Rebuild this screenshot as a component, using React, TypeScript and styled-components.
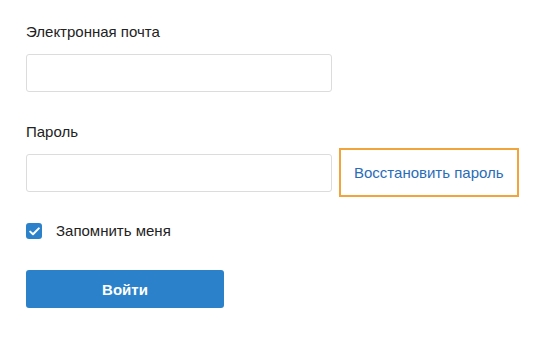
import React from 'react';
import styled, { createGlobalStyle } from 'styled-components';

const GlobalStyle = createGlobalStyle`
  body {
    margin: 0;
    background: #fff;
    font-family: 'Liberation Sans', Arial, sans-serif;
    color: #222;
  }
`;

const Form = styled.form`
  display: flex;
  flex-direction: column;
  align-items: flex-start;
  padding: 22px 0 0 26px;
`;

const Label = styled.label`
  font-size: 15px;
  line-height: 20px;
  color: #222;
`;

const Field = styled.div<{ $gap?: number }>`
  display: flex;
  flex-direction: column;
  margin-top: ${p => p.$gap || 0}px;
`;

const Input = styled.input`
  box-sizing: border-box;
  width: 306px;
  height: 38px;
  border: 1px solid #dcdcdc;
  border-radius: 3px;
  padding: 0 10px;
  font-size: 15px;
  outline: none;
`;

const Row = styled.div`
  display: flex;
  align-items: center;
  gap: 7px;
  margin-top: 6px;
`;

const ForgotLink = styled.a`
  box-sizing: border-box;
  display: flex;
  align-items: center;
  height: 49px;
  padding: 0 13px 0 13px;
  border: 2px solid #f2a43c;
  font-size: 15px;
  color: #2a6cb8;
  text-decoration: none;
  white-space: nowrap;
`;

const Remember = styled.label`
  display: flex;
  align-items: center;
  gap: 14px;
  margin-top: 24px;
  font-size: 15px;
  line-height: 20px;
  color: #222;
`;

const Check = styled.span`
  width: 16px;
  height: 16px;
  border-radius: 3px;
  background: #2b82cb;
  display: flex;
  align-items: center;
  justify-content: center;
`;

const Submit = styled.button`
  margin-top: 29px;
  width: 198px;
  height: 38px;
  border: none;
  border-radius: 3px;
  background: #2b82cb;
  color: #fff;
  font-family: inherit;
  font-size: 15px;
  font-weight: 700;
`;

const App: React.FC = () => (
  <>
    <GlobalStyle />
    <Form onSubmit={e => e.preventDefault()}>
      <Field>
        <Label>Электронная почта</Label>
      </Field>
      <Field $gap={12}>
        <Input type="email" />
      </Field>
      <Field $gap={30}>
        <Label>Пароль</Label>
      </Field>
      <Row>
        <Input type="password" />
        <ForgotLink href="#">Восстановить пароль</ForgotLink>
      </Row>
      <Remember>
        <Check>
          <svg width="11" height="9" viewBox="0 0 11 9">
            <path d="M1.2 4.6 L4 7.3 L9.8 1.4" fill="none" stroke="#fff" strokeWidth="2" strokeLinecap="round" strokeLinejoin="round" />
          </svg>
        </Check>
        Запомнить меня
      </Remember>
      <Submit type="submit">Войти</Submit>
    </Form>
  </>
);

export default App;
